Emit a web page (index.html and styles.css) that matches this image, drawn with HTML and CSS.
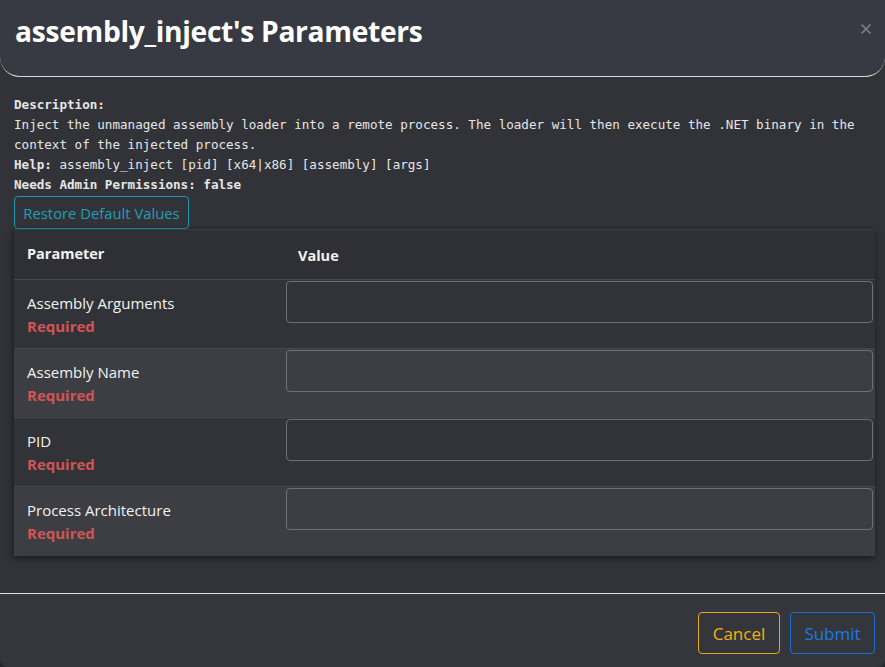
FILE: index.html
```html
<!DOCTYPE html>
<html>
<head>
<meta charset="utf-8">
<link rel="stylesheet" href="styles.css">
</head>
<body>
<div class="dialog">
  <header class="dlg-header">
    <h1 class="dlg-title">assembly_inject's Parameters</h1>
    <button class="close-btn" aria-label="close">
      <svg width="12" height="12" viewBox="0 0 12 12"><path d="M1.5 1.5L10.5 10.5M10.5 1.5L1.5 10.5" stroke="#7d8087" stroke-width="1.6" fill="none"/></svg>
    </button>
  </header>
  <section class="dlg-body">
    <div class="desc">
      <div class="b">Description:</div>
      <div>Inject the unmanaged assembly loader into a remote process. The loader will then execute the .NET binary in the context of the injected process.</div>
      <div><span class="b">Help:</span> assembly_inject [pid] [x64|x86] [assembly] [args]</div>
      <div class="b">Needs Admin Permissions: false</div>
    </div>
    <button class="btn btn-info">Restore Default Values</button>
    <div class="table-paper">
      <div class="row head">
        <div class="c1">Parameter</div>
        <div class="c2 val">Value</div>
      </div>
      <div class="row">
        <div class="c1"><div class="pname">Assembly Arguments</div><div class="req">Required</div></div>
        <div class="c2"><div class="input"></div></div>
      </div>
      <div class="row alt">
        <div class="c1"><div class="pname">Assembly Name</div><div class="req">Required</div></div>
        <div class="c2"><div class="input"></div></div>
      </div>
      <div class="row">
        <div class="c1"><div class="pname">PID</div><div class="req">Required</div></div>
        <div class="c2"><div class="input"></div></div>
      </div>
      <div class="row alt">
        <div class="c1"><div class="pname">Process Architecture</div><div class="req">Required</div></div>
        <div class="c2"><div class="input"></div></div>
      </div>
    </div>
  </section>
  <footer class="dlg-footer">
    <button class="btn btn-warn">Cancel</button>
    <button class="btn btn-primary">Submit</button>
  </footer>
</div>
</body>
</html>
```

FILE: styles.css
```css
html, body {
  margin: 0;
  padding: 0;
  background: #26272b;
}
body {
  font-family: "Open Sans", "Noto Sans", sans-serif;
  color: #f2f2f2;
}
.dialog {
  width: 885px;
  height: 667px;
  background: #323338;
  border-radius: 0 0 8px 8px;
  display: flex;
  flex-direction: column;
  overflow: hidden;
}
.dlg-header {
  height: 76px;
  background: #373a42;
  border-bottom: 1px solid #d8d8d8;
  border-radius: 0 0 20px 20px;
  display: flex;
  align-items: flex-start;
  justify-content: space-between;
  padding: 0 12px 0 15px;
  flex-shrink: 0;
}
.dlg-title {
  margin: 12px 0 0;
  font-size: 28.2px;
  font-weight: 700;
  letter-spacing: -0.3px;
  color: #ffffff;
}
.close-btn {
  background: none;
  border: none;
  padding: 0;
  margin-top: 22px;
  width: 14px;
  height: 14px;
  display: flex;
  align-items: center;
  justify-content: center;
}
.dlg-body {
  padding: 18px 10px 37px 14px;
  flex: 1;
}
.desc {
  font-family: "DejaVu Sans Mono", "Liberation Mono", monospace;
  font-size: 12.58px;
  line-height: 20px;
  color: #e6e6e6;
}
.b { font-weight: 700; }
.btn {
  font-family: "Open Sans", "Noto Sans", sans-serif;
  background: transparent;
  border-radius: 4px;
  cursor: pointer;
}
.btn-info {
  margin-top: 1px;
  height: 33px;
  width: 175px;
  padding: 0;
  border: 1px solid #1f97ad;
  color: #1f9fb6;
  font-size: 14.8px;
  display: block;
}
.table-paper {
  margin-top: 0;
  width: 861px;
  box-shadow: 0 3px 6px rgba(0,0,0,0.35), -2px 0 6px rgba(0,0,0,0.2);
  border-top: 1px solid #3a3d42;
}
.row {
  display: flex;
  height: 68px;
  border-bottom: 1px solid #414a50;
  background: #323338;
}
.row.alt { background: #3d3e43; }
.row:last-child { border-bottom: none; height: 69px; }
.row.head {
  height: 49px;
  background: #2f3035;
  align-items: center;
}
.c1 {
  width: 259px;
  padding-left: 13px;
  flex-shrink: 0;
}
.c2 {
  flex: 1;
  padding-right: 2px;
}
.head .c1, .head .c2 {
  font-weight: 700;
  font-size: 14.5px;
  color: #f2f2f2;
}
.head .c1 { padding-bottom: 3px; }
.head .c2.val { padding-left: 12px; padding-top: 1px; }
.row:not(.head) .c1 { padding-top: 12px; }
.pname {
  font-size: 15px;
  line-height: 22px;
  color: #f2f2f2;
}
.req {
  font-size: 15px;
  font-weight: 700;
  line-height: 24px;
  color: #d05556;
}
.input {
  margin-top: 1px;
  height: 40px;
  border: 1px solid #6e7074;
  border-radius: 4px;
}
.dlg-footer {
  height: 74px;
  border-top: 1px solid #e0e0e0;
  background: #35363b;
  display: flex;
  justify-content: flex-end;
  align-items: flex-start;
  gap: 10px;
  padding: 18px 10px 0 0;
  flex-shrink: 0;
  box-sizing: border-box;
}
.btn-warn, .btn-primary {
  height: 42px;
  font-size: 17px;
  padding: 0;
}
.btn-warn {
  border: 1px solid #e0a91a;
  color: #efb313;
  width: 82px;
}
.btn-primary {
  border: 1px solid #1a6fd0;
  color: #1c79e6;
  width: 85px;
}
```
